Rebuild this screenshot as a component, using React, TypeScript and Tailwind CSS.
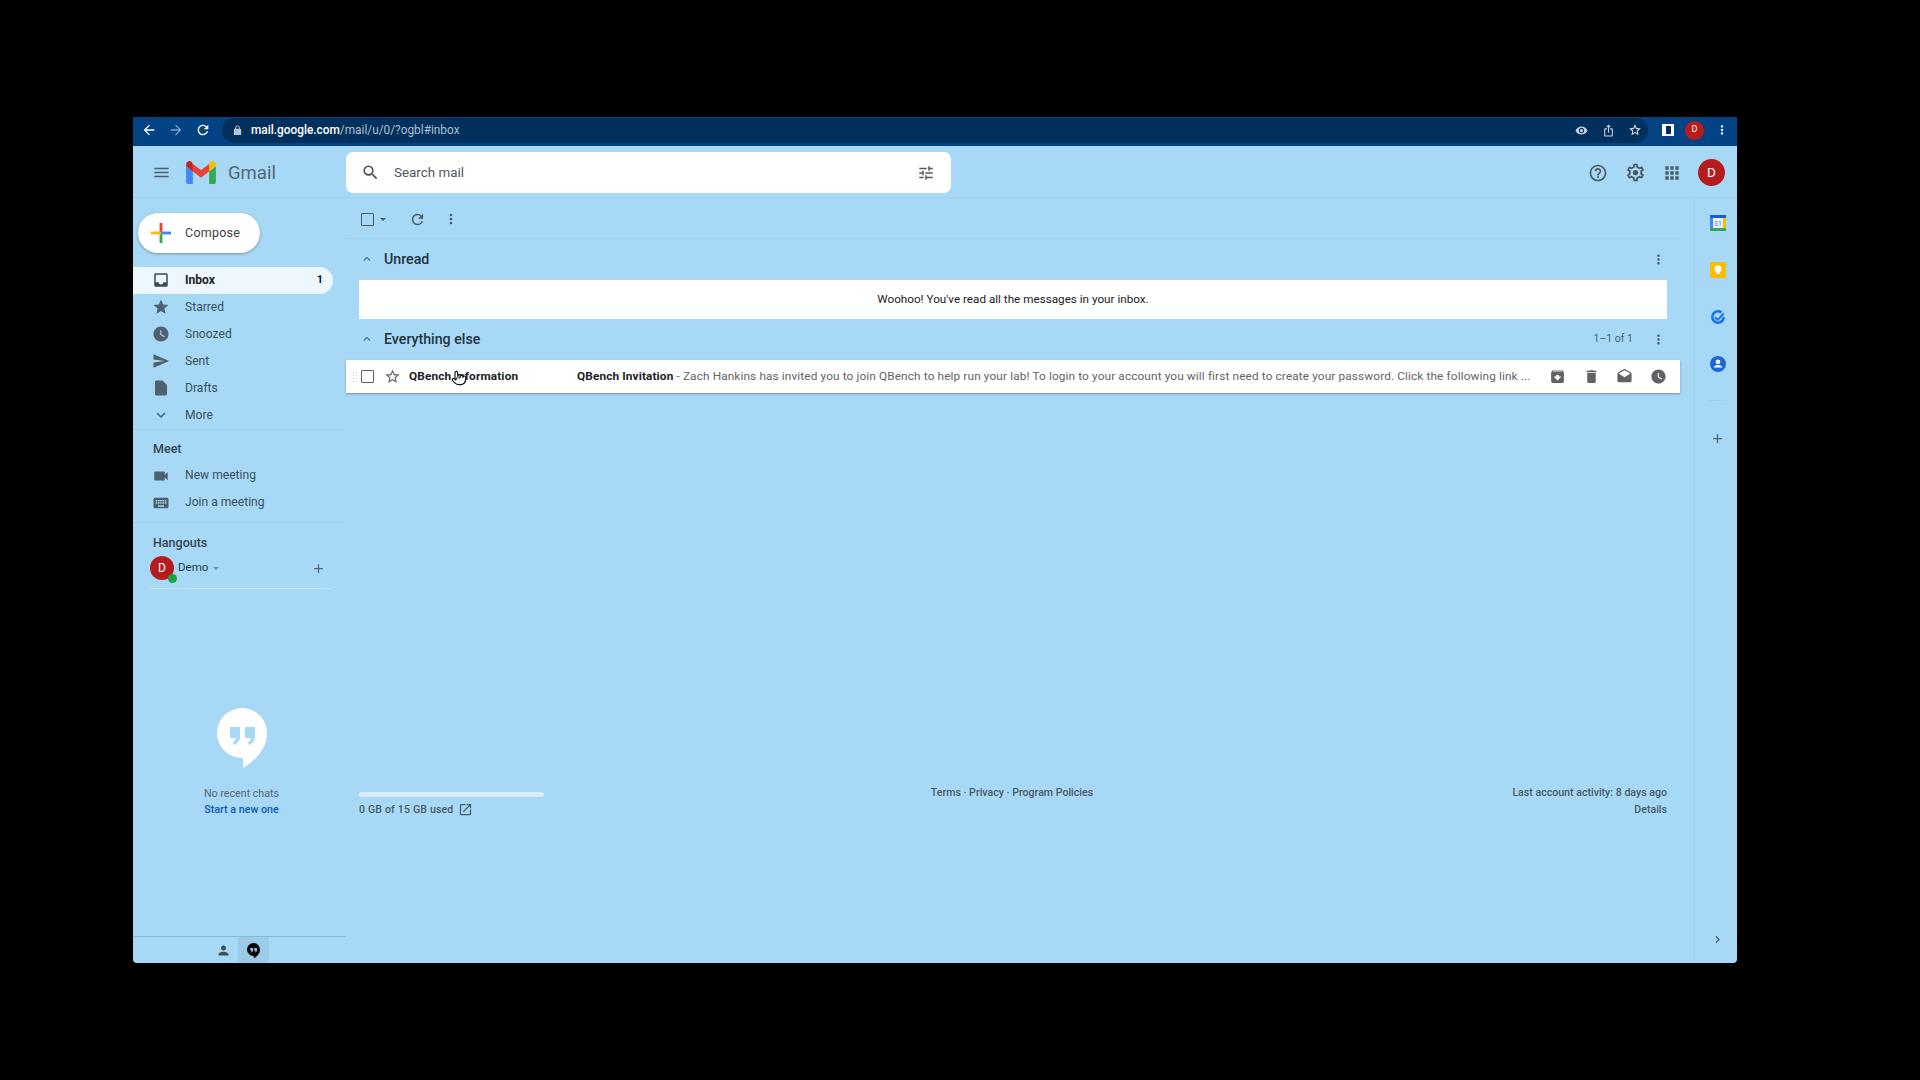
import React from "react";
import { Pointer } from "lucide-react";

const P = {
  back: "M20 11H7.83l5.59-5.59L12 4l-8 8 8 8 1.41-1.41L7.83 13H20v-2z",
  forward: "M12 4l-1.41 1.41L16.17 11H4v2h12.17l-5.58 5.59L12 20l8-8z",
  refresh: "M17.65 6.35A7.958 7.958 0 0 0 12 4c-4.42 0-7.99 3.58-7.99 8s3.57 8 7.99 8c3.73 0 6.84-2.55 7.73-6h-2.08A5.99 5.99 0 0 1 12 18c-3.31 0-6-2.69-6-6s2.69-6 6-6c1.66 0 3.14.69 4.22 1.78L13 11h7V4l-2.35 2.35z",
  lock: "M18 8h-1V6c0-2.76-2.24-5-5-5S7 3.24 7 6v2H6c-1.1 0-2 .9-2 2v10c0 1.1.9 2 2 2h12c1.1 0 2-.9 2-2V10c0-1.1-.9-2-2-2zM9 6c0-1.66 1.34-3 3-3s3 1.34 3 3v2H9V6z",
  eye: "M12 4.5C7 4.5 2.73 7.61 1 12c1.73 4.39 6 7.5 11 7.5s9.27-3.11 11-7.5c-1.73-4.39-6-7.5-11-7.5zM12 17c-2.76 0-5-2.24-5-5s2.24-5 5-5 5 2.24 5 5-2.24 5-5 5zm0-8c-1.66 0-3 1.34-3 3s1.34 3 3 3 3-1.34 3-3-1.34-3-3-3z",
  share: "M16 5l-1.42 1.42-1.59-1.59V16h-1.98V4.83L9.42 6.42 8 5l4-4 4 4zm4 5v11c0 1.1-.9 2-2 2H6c-1.11 0-2-.9-2-2V10c0-1.11.89-2 2-2h3v2H6v11h12V10h-3V8h3c1.1 0 2 .89 2 2z",
  starO: "M22 9.24l-7.19-.62L12 2 9.19 8.63 2 9.24l5.46 4.73L5.82 21 12 17.27 18.18 21l-1.63-7.03L22 9.24zM12 15.4l-3.76 2.27 1-4.28-3.32-2.88 4.38-.38L12 6.1l1.71 4.04 4.38.38-3.32 2.88 1 4.28L12 15.4z",
  star: "M12 17.27L18.18 21l-1.64-7.03L22 9.24l-7.19-.61L12 2 9.19 8.63 2 9.24l5.46 4.73L5.82 21z",
  more: "M12 8c1.1 0 2-.9 2-2s-.9-2-2-2-2 .9-2 2 .9 2 2 2zm0 2c-1.1 0-2 .9-2 2s.9 2 2 2 2-.9 2-2-.9-2-2-2zm0 6c-1.1 0-2 .9-2 2s.9 2 2 2 2-.9 2-2-.9-2-2-2z",
  menu: "M3 18h18v-2H3v2zm0-5h18v-2H3v2zm0-7v2h18V6H3z",
  search: "M15.5 14h-.79l-.28-.27A6.471 6.471 0 0 0 16 9.5 6.5 6.5 0 1 0 9.5 16c1.61 0 3.09-.59 4.23-1.57l.27.28v.79l5 4.99L20.49 19l-4.99-5zm-6 0C7.01 14 5 11.99 5 9.5S7.01 5 9.5 5 14 7.01 14 9.5 11.99 14 9.5 14z",
  tune: "M3 17v2h6v-2H3zM3 5v2h10V5H3zm10 16v-2h8v-2h-8v-2h-2v6h2zM7 9v2H3v2h4v2h2V9H7zm14 4v-2H11v2h10zm-6-4h2V7h4V5h-4V3h-2v6z",
  help: "M11 18h2v-2h-2v2zm1-16C6.48 2 2 6.48 2 12s4.48 10 10 10 10-4.48 10-10S17.52 2 12 2zm0 18c-4.41 0-8-3.59-8-8s3.59-8 8-8 8 3.59 8 8-3.59 8-8 8zm0-14c-2.21 0-4 1.79-4 4h2c0-1.1.9-2 2-2s2 .9 2 2c0 2-3 1.75-3 5h2c0-2.25 3-2.5 3-5 0-2.21-1.79-4-4-4z",
  gear: "M19.43 12.98c.04-.32.07-.64.07-.98 0-.34-.03-.66-.07-.98l2.11-1.65c.19-.15.24-.42.12-.64l-2-3.46a.5.5 0 0 0-.61-.22l-2.49 1c-.52-.4-1.08-.73-1.69-.98l-.38-2.65A.488.488 0 0 0 14 2h-4c-.25 0-.46.18-.49.42l-.38 2.65c-.61.25-1.17.59-1.69.98l-2.49-1a.566.566 0 0 0-.18-.03c-.17 0-.34.09-.43.25l-2 3.46c-.13.22-.07.49.12.64l2.11 1.65c-.04.32-.07.65-.07.98 0 .33.03.66.07.98l-2.11 1.65c-.19.15-.24.42-.12.64l2 3.46a.5.5 0 0 0 .61.22l2.49-1c.52.4 1.08.73 1.69.98l.38 2.65c.03.24.24.42.49.42h4c.25 0 .46-.18.49-.42l.38-2.65c.61-.25 1.17-.59 1.69-.98l2.49 1c.06.02.12.03.18.03.17 0 .34-.09.43-.25l2-3.46c.12-.22.07-.49-.12-.64l-2.11-1.65zm-1.98-1.71c.04.31.05.52.05.73 0 .21-.02.43-.05.73l-.14 1.13.89.7 1.08.84-.7 1.21-1.27-.51-1.04-.42-.9.68c-.43.32-.84.56-1.25.73l-1.06.43-.16 1.13-.2 1.35h-1.4l-.19-1.35-.16-1.13-1.06-.43c-.43-.18-.83-.41-1.23-.71l-.91-.7-1.06.43-1.27.51-.7-1.21 1.08-.84.89-.7-.14-1.13c-.03-.31-.05-.54-.05-.74s.02-.43.05-.73l.14-1.13-.89-.7-1.08-.84.7-1.21 1.27.51 1.04.42.9-.68c.43-.32.84-.56 1.25-.73l1.06-.43.16-1.13.2-1.35h1.39l.19 1.35.16 1.13 1.06.43c.43.18.83.41 1.23.71l.91.7 1.06-.43 1.27-.51.7 1.21-1.07.85-.89.7.14 1.13zM12 9a3 3 0 1 0 0 6 3 3 0 0 0 0-6z",
  apps: "M4 8h4V4H4v4zm6 12h4v-4h-4v4zm-6 0h4v-4H4v4zm0-6h4v-4H4v4zm6 0h4v-4h-4v4zm6-10v4h4V4h-4zm-6 4h4V4h-4v4zm6 6h4v-4h-4v4zm0 6h4v-4h-4v4z",
  inbox: "M19 3H5c-1.1 0-2 .9-2 2v14c0 1.1.9 2 2 2h14c1.1 0 2-.9 2-2V5c0-1.1-.9-2-2-2zm0 12h-4c0 1.66-1.35 3-3 3s-3-1.34-3-3H5V5h14v10z",
  clock: "M12 2C6.5 2 2 6.5 2 12s4.5 10 10 10 10-4.5 10-10S17.5 2 12 2zm4.2 14.2L11 13V7h1.5v5.2l4.5 2.7-.8 1.3z",
  send: "M2.01 21L23 12 2.01 3 2 10l15 2-15 2z",
  draft: "M6 2c-1.1 0-2 .9-2 2v16c0 1.1.9 2 2 2h12c1.1 0 2-.9 2-2V8l-6-6H6z",
  down: "M16.59 8.59L12 13.17 7.41 8.59 6 10l6 6 6-6z",
  up: "M12 8l-6 6 1.41 1.41L12 10.83l4.59 4.58L18 14z",
  right: "M8.59 16.59L13.17 12 8.59 7.41 10 6l6 6-6 6z",
  video: "M17 10.5V7c0-.55-.45-1-1-1H4c-.55 0-1 .45-1 1v10c0 .55.45 1 1 1h12c.55 0 1-.45 1-1v-3.5l4 4v-11l-4 4z",
  keyboard: "M20 5H4c-1.1 0-1.99.9-1.99 2L2 17c0 1.1.9 2 2 2h16c1.1 0 2-.9 2-2V7c0-1.1-.9-2-2-2zm-9 3h2v2h-2V8zm0 3h2v2h-2v-2zM8 8h2v2H8V8zm0 3h2v2H8v-2zm-1 2H5v-2h2v2zm0-3H5V8h2v2zm9 7H8v-2h8v2zm0-4h-2v-2h2v2zm0-3h-2V8h2v2zm3 3h-2v-2h2v2zm0-3h-2V8h2v2z",
  plus: "M19 13h-6v6h-2v-6H5v-2h6V5h2v6h6v2z",
  archive: "M20.54 5.23l-1.39-1.68C18.88 3.21 18.47 3 18 3H6c-.47 0-.88.21-1.16.55L3.46 5.23C3.17 5.57 3 6.02 3 6.5V19c0 1.1.9 2 2 2h14c1.1 0 2-.9 2-2V6.5c0-.48-.17-.93-.46-1.27zM12 17.5L6.5 12H10v-2h4v2h3.5L12 17.5zM5.12 5l.81-1h12l.94 1H5.12z",
  trash: "M6 19c0 1.1.9 2 2 2h8c1.1 0 2-.9 2-2V7H6v12zM19 4h-3.5l-1-1h-5l-1 1H5v2h14V4z",
  read: "M21.99 8c0-.72-.37-1.35-.94-1.7L12 1 2.95 6.3C2.38 6.65 2 7.28 2 8v10c0 1.1.9 2 2 2h16c1.1 0 2-.9 2-2l-.01-10zM12 13L3.74 7.84 12 3l8.26 4.84L12 13z",
  open: "M19 19H5V5h7V3H5a2 2 0 0 0-2 2v14a2 2 0 0 0 2 2h14c1.1 0 2-.9 2-2v-7h-2v7zM14 3v2h3.59l-9.83 9.83 1.41 1.41L19 6.41V10h2V3h-7z",
  person: "M12 12c2.21 0 4-1.79 4-4s-1.79-4-4-4-4 1.79-4 4 1.79 4 4 4zm0 2c-2.67 0-8 1.34-8 4v2h16v-2c0-2.66-5.33-4-8-4z",
};

function I({ d, s = 16, c = "#465a68" }: { d: string; s?: number; c?: string }) {
  return (
    <svg width={s} height={s} viewBox="0 0 24 24" fill={c} className="shrink-0" fillRule="evenodd">
      <path d={d} />
    </svg>
  );
}

function Box({ w, children }: { w: string; children: React.ReactNode }) {
  return <div className={`flex items-center justify-center shrink-0 ${w}`}>{children}</div>;
}

function GmailLogo() {
  return (
    <svg width="30" height="23" viewBox="0 0 31 24" className="shrink-0">
      <path d="M2 24h5V11L0 5.5V22a2 2 0 0 0 2 2z" fill="#4285f4" />
      <path d="M24 24h5a2 2 0 0 0 2-2V5.5L24 11z" fill="#34a853" />
      <path d="M24 3v8l7-5.5V3.5C31 .6 27.7-1 25.4.8z" fill="#fbbc04" />
      <path d="M7 11V3l8.5 6.5L24 3v8l-8.5 6.5z" fill="#ea4335" />
      <path d="M0 3.5v2L7 11V3L5.6.8C3.3-1 0 .6 0 3.5z" fill="#c5221f" />
    </svg>
  );
}

function PlusColor() {
  return (
    <svg width="22" height="22" viewBox="0 0 22 22" className="shrink-0">
      <rect x="9.6" y="1" width="2.8" height="10" fill="#ea4335" />
      <rect x="9.6" y="11" width="2.8" height="10" fill="#34a853" />
      <rect x="1" y="9.6" width="10" height="2.8" fill="#fbbc04" />
      <rect x="11" y="9.6" width="10" height="2.8" fill="#4285f4" />
    </svg>
  );
}

function HangoutBubble({ s, bg, fg }: { s: number; bg: string; fg: string }) {
  return (
    <svg width={s} height={s * 1.2} viewBox="0 0 50 60" className="shrink-0">
      <path d="M25 0a25 25 0 0 0 0 50h1v10c10-6 24-18 24-35A25 25 0 0 0 25 0z" fill={bg} />
      <path d="M13 19h10v10c0 4-3 7-6 8l-1-3c2-1 3-3 3-4h-6zM28 19h10v10c0 4-3 7-6 8l-1-3c2-1 3-3 3-4h-6z" fill={fg} />
    </svg>
  );
}

function Nav({ icon, label, active, count, raise }: { icon: string; label: string; active?: boolean; count?: string; raise?: boolean }) {
  return (
    <div className={`flex items-center h-[27px] w-[200px] rounded-r-full ${active ? "bg-[#eef7fd] font-bold text-[#202124]" : "text-[#3c4f5c]"}`}>
      <Box w={`w-[55px] ${raise ? "-mt-[2px]" : ""}`}><I d={icon} s={18} c={active ? "#3d4850" : "#4d6170"} /></Box>
      <span className="text-[12.1px] -ml-[3px] flex-1">{label}</span>
      {count && <span className="text-[11px] pr-[10px]">{count}</span>}
    </div>
  );
}

function SectionHead({ title, right }: { title: string; right?: string }) {
  return (
    <div className="flex items-center h-[40px] pl-[13px] pr-[10px]">
      <Box w="w-[16px]"><I d={P.up} s={14} c="#51606b" /></Box>
      <span className="ml-[9px] mt-[2px] text-[14.2px] font-medium text-[#233340] flex-1">{title}</span>
      {right && <span className="text-[10.5px] text-[#4b5c68] mr-[13px]">{right}</span>}
      <Box w="w-[24px]"><I d={P.more} s={15} c="#4d5f6b" /></Box>
    </div>
  );
}

function SideApp({ children }: { children: React.ReactNode }) {
  return <div className="h-[47px] flex items-center justify-center">{children}</div>;
}

export default function App() {
  return (
    <div className="w-[1920px] h-[1080px] bg-black pt-[117px] pl-[133px] overflow-hidden" style={{ fontFamily: "Roboto, 'Noto Sans', sans-serif" }}>
      <div className="w-[1604px] h-[846px] bg-[#a7d9f7] flex flex-col rounded-b-[4px] overflow-hidden">
        {/* browser bar */}
        <div className="h-[29px] shrink-0 bg-[#034383] flex items-center text-white pr-[8px] pb-[3px]">
          <div className="flex items-center gap-[11px] pl-[8px]">
            <I d={P.back} s={16} c="#ffffff" />
            <I d={P.forward} s={16} c="#7fa2c6" />
            <I d={P.refresh} s={16} c="#ffffff" />
          </div>
          <div className="ml-[11px] flex-1 h-[25px] rounded-full bg-[#02305c] flex items-center pl-[10px] pr-[6px]">
            <I d={P.lock} s={11} c="#b6c6d6" />
            <span className="ml-[8px] mt-[2px] text-[11.85px] font-medium text-white">mail.google.com<span className="font-normal text-[#a9bfd4]">/mail/u/0/?ogbl#inbox</span></span>
            <div className="ml-auto flex items-center gap-[13.5px]">
              <I d={P.eye} s={13} c="#c5d3e0" />
              <I d={P.share} s={13} c="#c5d3e0" />
              <I d={P.starO} s={14} c="#e8eef4" />
            </div>
          </div>
          <div className="w-[12px] h-[12px] bg-white flex shrink-0 ml-[14px]"><div className="w-[4px]" /><div className="w-[5px] h-[8px] mt-[2px] bg-[#02305c]" /></div>
          <div className="w-[19px] h-[19px] rounded-full bg-[#b71c1c] text-[9px] flex items-center justify-center ml-[11px]">D</div>
          <Box w="w-[14px] ml-[11px]"><I d={P.more} s={14} c="#ffffff" /></Box>
        </div>

        {/* gmail header */}
        <div className="h-[52px] shrink-0 flex items-center border-b border-[#9fd0ee] pt-[2px]">
          <div className="w-[213px] flex items-center shrink-0">
            <Box w="w-[53px] pl-[4px]"><I d={P.menu} s={19} c="#4b5f6d" /></Box>
            <GmailLogo />
            <span className="ml-[12px] mt-[2px] text-[18.5px] text-[#55666f]">Gmail</span>
          </div>
          <div className="w-[605px] h-[41px] bg-white rounded-[7px] flex items-center pl-[15px] pr-[16px]">
            <I d={P.search} s={19} c="#4a4f54" />
            <span className="ml-[14px] mt-[2px] text-[13.4px] text-[#50565b] flex-1">Search mail</span>
            <I d={P.tune} s={18} c="#55595d" />
          </div>
          <div className="ml-auto flex items-center pr-[12px]">
            <I d={P.help} s={20} c="#4a5a65" />
            <Box w="w-[20px] ml-[17px]"><I d={P.gear} s={21} c="#4a5a65" /></Box>
            <Box w="w-[20px] ml-[17px]"><I d={P.apps} s={20} c="#4a5a65" /></Box>
            <div className="w-[27px] h-[27px] rounded-full bg-[#b71c1c] text-white text-[13.5px] flex items-center justify-center ml-[16px]">D</div>
          </div>
        </div>

        <div className="flex flex-1 min-h-0">
          {/* sidebar */}
          <aside className="w-[213px] shrink-0 flex flex-col">
            <div className="ml-[5px] mt-[15px] w-[122px] h-[40px] rounded-full bg-white shadow-[0_1px_3px_rgba(60,64,67,0.45)] flex items-center pl-[12px] shrink-0">
              <PlusColor />
              <span className="ml-[13px] text-[12.5px] text-[#3c4043] tracking-[0.25px]">Compose</span>
            </div>
            <div className="mt-[14px] shrink-0">
              <Nav icon={P.inbox} label="Inbox" active count="1" raise />
              <Nav icon={P.star} label="Starred" raise />
              <Nav icon={P.clock} label="Snoozed" raise />
              <Nav icon={P.send} label="Sent" raise />
              <Nav icon={P.draft} label="Drafts" raise />
              <Nav icon={P.down} label="More" raise />
            </div>
            <div className="border-t border-[#9fd0ee] pt-[10px] pl-[20px] text-[12.5px] font-medium text-[#33444f] h-[33px] shrink-0">Meet</div>
            <Nav icon={P.video} label="New meeting" />
            <Nav icon={P.keyboard} label="Join a meeting" />
            <div className="mt-[6px] border-t border-[#9fd0ee] pt-[11px] pl-[20px] text-[12.5px] font-medium text-[#33444f] h-[33px] shrink-0">Hangouts</div>
            <div className="flex items-center pl-[17px] h-[26px] w-[199px] shrink-0 relative">
              <div className="relative w-[24px] h-[24px] rounded-full bg-[#b71c1c] text-white text-[12px] flex items-center justify-center shrink-0">
                D
                <span className="absolute -right-[3px] -bottom-[3px] w-[9px] h-[9px] rounded-full bg-[#1ea446]" />
              </div>
              <span className="ml-[4px] text-[11.5px] text-[#263845] -mt-[1px]">Demo</span>
              <div className="ml-[5px] w-0 h-0 border-x-[3px] border-x-transparent border-t-[3px] border-t-[#7a8d9a]" />
              <div className="ml-auto mr-[6px]"><I d={P.plus} s={15} c="#52646f" /></div>
            </div>
            <div className="ml-[18px] w-[181px] mt-[7px] border-t border-[#c7e6f8] shrink-0" />
            <div className="flex flex-col items-center w-[173px] ml-[22px] mt-[119px] shrink-0">
              <HangoutBubble s={50} bg="#ffffff" fg="#a7d9f7" />
              <div className="text-[10.7px] text-[#54646f] mt-[18px] leading-[16px]">No recent chats</div>
              <div className="text-[10.7px] font-medium text-[#0b57b8] leading-[16px]">Start a new one</div>
            </div>
            <div className="mt-auto h-[27px] border-t border-[#83b8d8] flex items-stretch pl-[75px] shrink-0">
              <Box w="w-[30px] pt-[1px]"><I d={P.person} s={15} c="#3f4f5a" /></Box>
              <Box w="w-[31px] bg-[#9ccbe7] pt-[1px]"><HangoutBubble s={13} bg="#000000" fg="#9ccbe7" /></Box>
            </div>
          </aside>

          {/* main */}
          <main className="flex-1 flex flex-col min-w-0">
            <div className="w-[1334px] h-[41px] flex items-center border-b border-[#9fd0ee] shrink-0 pt-[2px]">
              <Box w="w-[42px]"><div className="w-[13px] h-[13px] border-[1.5px] border-[#4a5a65] rounded-[1px]" /></Box>
              <div className="-ml-[8px] w-0 h-0 border-x-[3.5px] border-x-transparent border-t-[3.5px] border-t-[#4a5a65]" />
              <Box w="w-[18px] ml-[22px]"><I d={P.refresh} s={17} c="#4a5a65" /></Box>
              <Box w="w-[16px] ml-[17px]"><I d={P.more} s={16} c="#4a5a65" /></Box>
            </div>
            <div className="w-[1334px]">
              <SectionHead title="Unread" />
              <div className="mx-[13px] h-[40px] bg-white border-t border-[#bcd5e6] flex items-center justify-center text-[11.7px] text-[#202124]">
                Woohoo! You've read all the messages in your inbox.
              </div>
              <SectionHead title="Everything else" right="1–1 of 1" />
              <div className="relative mt-[1px] h-[33px] bg-white shadow-[0_1px_2px_rgba(60,64,67,0.5)] flex items-center">
                <div className="w-[6px] h-[12px] ml-[6px] shrink-0" style={{ backgroundImage: "radial-gradient(#c9c9c9 1px, transparent 1px)", backgroundSize: "3px 3px" }} />
                <div className="ml-[3px] w-[13px] h-[13px] border-[1.5px] border-[#5f6368] rounded-[1px] shrink-0" />
                <div className="ml-[10px]"><I d={P.starO} s={17} c="#5f6368" /></div>
                <div className="ml-[8px] w-[168px] text-[11.8px] font-bold text-[#202124] shrink-0 tracking-[0.15px]">QBench Information</div>
                <div className="w-[953px] shrink-0 whitespace-nowrap overflow-hidden text-[11.8px] text-[#5f6368] tracking-[0.13px]">
                  <span className="font-bold text-[#202124]">QBench Invitation</span> - Zach Hankins has invited you to join QBench to help run your lab! To login to your account you will first need to create your password. Click the following link ...
                </div>
                <div className="ml-auto flex items-center pr-[13.5px] gap-[16.5px]">
                  <I d={P.archive} s={17} c="#5f6368" />
                  <I d={P.trash} s={17} c="#5f6368" />
                  <I d={P.read} s={17} c="#5f6368" />
                  <I d={P.clock} s={17} c="#5f6368" />
                </div>
                <Pointer size={16} fill="#ffffff" color="#111111" strokeWidth={1.7} className="absolute left-[105px] top-[10px]" />
              </div>
            </div>
            <div className="w-[1334px] mt-[393px] px-[13px] grid grid-cols-3 text-[10.6px] text-[#4a5a65] font-medium shrink-0">
              <div>
                <div className="w-[185px] h-[5px] mt-[6px] rounded-full bg-[#dcecf6]" />
                <div className="flex items-center mt-[4.5px] h-[16px]">
                  <span className="tracking-[0.15px]">0 GB of 15 GB used</span>
                  <div className="ml-[5px]"><I d={P.open} s={15} c="#465a68" /></div>
                </div>
              </div>
              <div className="text-center leading-[14px] -ml-[2px]">Terms · Privacy · Program Policies</div>
              <div className="text-right leading-[14px]">
                <div>Last account activity: 8 days ago</div>
                <div className="mt-[3px]">Details</div>
              </div>
            </div>
          </main>

          {/* side apps */}
          <div className="w-[44px] shrink-0 border-l border-[#9fd0ee] flex flex-col items-center pt-[1px] pl-[4px] -ml-[44px] relative">
            <SideApp>
              <svg width="16" height="16" viewBox="0 0 16 16">
                <rect width="16" height="16" rx="1" fill="#4285f4" />
                <rect x="0" y="13" width="16" height="3" fill="#34a853" />
                <rect x="13" y="3" width="3" height="10" fill="#fbbc04" />
                <rect x="0" y="0" width="16" height="3" fill="#1a5fc2" />
                <rect x="3" y="3" width="10" height="10" fill="#e8f1fb" />
                <text x="8" y="11" fontSize="6.5" textAnchor="middle" fill="#4285f4" fontFamily="Roboto">31</text>
              </svg>
            </SideApp>
            <SideApp>
              <svg width="16" height="16" viewBox="0 0 16 16">
                <rect width="16" height="16" rx="1.5" fill="#fbbc04" />
                <circle cx="8" cy="7" r="3.4" fill="#ffffff" />
                <rect x="6.5" y="10" width="3" height="2" fill="#ffffff" />
              </svg>
            </SideApp>
            <SideApp>
              <svg width="16" height="16" viewBox="0 0 16 16">
                <path d="M8 1a7 7 0 1 0 7 7h-2.6A4.4 4.4 0 1 1 8 3.6 4.3 4.3 0 0 1 10.6 4.4L12.4 2.4A7 7 0 0 0 8 1z" fill="#1a73e8" />
                <path d="M5.4 7.4l2.2 2.2 6-6.4.4 2.6-6.3 6.4-3.6-3.4z" fill="#1a73e8" />
              </svg>
            </SideApp>
            <SideApp>
              <svg width="16" height="16" viewBox="0 0 16 16">
                <circle cx="8" cy="8" r="8" fill="#1a67d8" />
                <circle cx="8" cy="5.8" r="2.4" fill="#ffffff" />
                <path d="M3.6 11.6c.6-1.8 2.6-2.6 4.4-2.6s3.8.8 4.4 2.6z" fill="#ffffff" />
              </svg>
            </SideApp>
            <div className="w-[18px] border-t border-[#9fd0ee] mt-[13px]" />
            <div className="mt-[30px]"><I d={P.plus} s={15} c="#52646f" /></div>
            <div className="mt-auto mb-[16px]"><I d={P.right} s={15} c="#4a5a65" /></div>
          </div>
        </div>
      </div>
    </div>
  );
}
